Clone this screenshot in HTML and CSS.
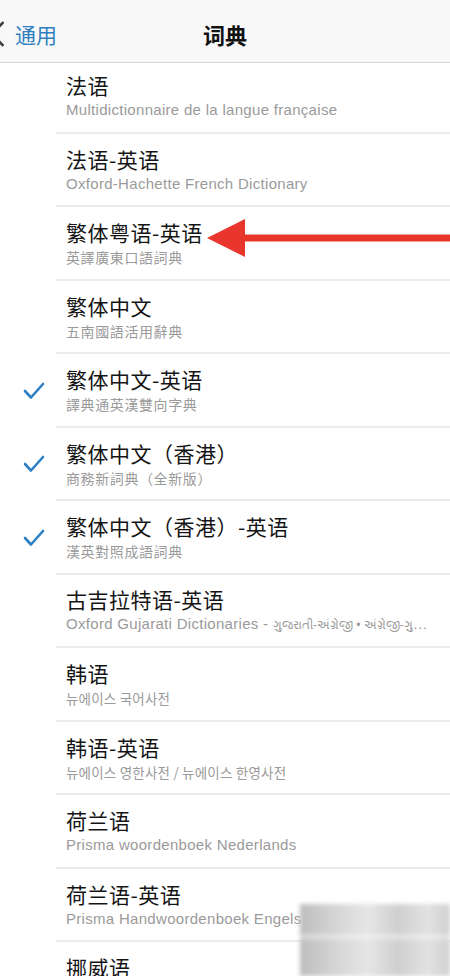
FILE: index.html
```html
<!DOCTYPE html>
<html lang="zh-CN">
<head>
<meta charset="utf-8">
<title>词典</title>
<link rel="stylesheet" href="styles.css">
</head>
<body>
<div class="page">
  <header class="nav">
    <div class="back">
      <svg class="chev" width="4" height="26" viewBox="0 0 4 26"><path d="M3.5 1 L-8 13 L3.5 25" fill="none" stroke="#3a3a3a" stroke-width="2.5"/></svg>
      <span class="back-label">通用</span>
    </div>
    <div class="nav-title">词典</div>
  </header>

  <main class="list">
    <div class="row row-first">
      <div class="mark"></div>
      <div class="body"><div class="title">法语</div><div class="sub">Multidictionnaire de la langue française</div></div>
    </div>
    <div class="row">
      <div class="mark"></div>
      <div class="body"><div class="title">法语-英语</div><div class="sub">Oxford-Hachette French Dictionary</div></div>
    </div>
    <div class="row">
      <div class="mark"></div>
      <div class="body"><div class="title">繁体粤语-英语</div><div class="sub tc">英譯廣東口語詞典</div></div>
    </div>
    <div class="row">
      <div class="mark"></div>
      <div class="body"><div class="title">繁体中文</div><div class="sub tc">五南國語活用辭典</div></div>
    </div>
    <div class="row">
      <div class="mark"><svg class="check" width="22" height="18" viewBox="0 0 22 18"><path d="M2 9 L8 15.5 L20 2" fill="none" stroke="#2d7fc4" stroke-width="2.6" stroke-linecap="round" stroke-linejoin="round"/></svg></div>
      <div class="body"><div class="title">繁体中文-英语</div><div class="sub tc">譯典通英漢雙向字典</div></div>
    </div>
    <div class="row">
      <div class="mark"><svg class="check" width="22" height="18" viewBox="0 0 22 18"><path d="M2 9 L8 15.5 L20 2" fill="none" stroke="#2d7fc4" stroke-width="2.6" stroke-linecap="round" stroke-linejoin="round"/></svg></div>
      <div class="body"><div class="title">繁体中文（香港）</div><div class="sub tc">商務新詞典（全新版）</div></div>
    </div>
    <div class="row">
      <div class="mark"><svg class="check" width="22" height="18" viewBox="0 0 22 18"><path d="M2 9 L8 15.5 L20 2" fill="none" stroke="#2d7fc4" stroke-width="2.6" stroke-linecap="round" stroke-linejoin="round"/></svg></div>
      <div class="body"><div class="title">繁体中文（香港）-英语</div><div class="sub tc">漢英對照成語詞典</div></div>
    </div>
    <div class="row">
      <div class="mark"></div>
      <div class="body"><div class="title">古吉拉特语-英语</div><div class="sub">Oxford Gujarati Dictionaries - <span class="gu">ગુજરાતી-અંગ્રેજી • અંગ્રેજી-ગુજરાતી</span></div></div>
    </div>
    <div class="row">
      <div class="mark"></div>
      <div class="body"><div class="title">韩语</div><div class="sub kr">뉴에이스 국어사전</div></div>
    </div>
    <div class="row">
      <div class="mark"></div>
      <div class="body"><div class="title">韩语-英语</div><div class="sub kr">뉴에이스 영한사전 / 뉴에이스 한영사전</div></div>
    </div>
    <div class="row">
      <div class="mark"></div>
      <div class="body"><div class="title">荷兰语</div><div class="sub">Prisma woordenboek Nederlands</div></div>
    </div>
    <div class="row">
      <div class="mark"></div>
      <div class="body"><div class="title">荷兰语-英语</div><div class="sub">Prisma Handwoordenboek Engels</div></div>
    </div>
    <div class="row">
      <div class="mark"></div>
      <div class="body"><div class="title">挪威语</div><div class="sub">Prisma woordenboek Noors</div></div>
    </div>
  </main>

  <svg class="arrow" width="245" height="42" viewBox="0 0 245 42">
    <polygon points="2,20 40,1 40,39" fill="#e8362d"/>
    <rect x="36" y="16.5" width="209" height="7" fill="#e8362d"/>
  </svg>

  <div class="watermark"></div>
</div>
</body>
</html>
```
FILE: styles.css
```css
html, body {
  margin: 0;
  padding: 0;
  background: #ffffff;
  overflow: hidden;
}

.page {
  position: relative;
  width: 450px;
  height: 976px;
  overflow: hidden;
  font-family: "Noto Sans CJK SC", "Noto Sans", sans-serif;
}

.nav {
  position: relative;
  box-sizing: border-box;
  height: 63px;
  padding-top: 6px;
  background: #f8f8f8;
  border-bottom: 1.5px solid #d6d6d6;
  display: flex;
  align-items: center;
  justify-content: center;
}

.back {
  position: absolute;
  left: 0;
  top: 6px;
  bottom: 0;
  display: flex;
  align-items: center;
}

.chev {
  display: block;
  margin-right: 11px;
}

.back-label {
  font-size: 21px;
  color: #2f7fbf;
  line-height: 1;
}

.nav-title {
  font-size: 22px;
  font-weight: 700;
  color: #111111;
  line-height: 1;
}

.list {
  display: flex;
  flex-direction: column;
}

.row {
  display: flex;
  height: 73.5px;
  flex: none;
}

.row-first {
  height: 70.5px;
}

.row-first .body {
  padding-top: 0;
  padding-bottom: 4px;
}

.mark {
  width: 56px;
  flex: none;
  box-sizing: border-box;
  padding-left: 23px;
  display: flex;
  align-items: center;
}

.check {
  display: block;
}

.body {
  flex: 1;
  min-width: 0;
  box-sizing: border-box;
  padding: 0 20px 0 10px;
  border-bottom: 2px solid #ebebeb;
  display: flex;
  flex-direction: column;
  justify-content: center;
}

.title {
  font-size: 21px;
  letter-spacing: 0.5px;
  line-height: 26px;
  color: #141414;
}

.sub {
  margin-top: 3px;
  font-family: "Liberation Sans", "Noto Sans", "Noto Sans CJK SC", sans-serif;
  font-size: 15px;
  line-height: 18px;
  letter-spacing: 0.3px;
  color: #9a9a9a;
  white-space: nowrap;
  overflow: hidden;
  text-overflow: ellipsis;
}

.gu {
  font-size: 12px;
  letter-spacing: 0;
}

.sub.tc {
  font-family: "Noto Sans CJK TC", sans-serif;
  font-size: 14px;
  letter-spacing: 0.6px;
}

.sub.kr {
  font-family: "Noto Sans CJK KR", sans-serif;
  font-size: 13.5px;
  letter-spacing: 0.2px;
}

.arrow {
  position: absolute;
  left: 205px;
  top: 218px;
}

.watermark {
  position: absolute;
  left: 300px;
  top: 904px;
  width: 150px;
  height: 72px;
  background:
    linear-gradient(180deg, rgba(255,255,255,0) 40%, rgba(255,255,255,0.5) 45%, rgba(255,255,255,0) 52%),
    linear-gradient(90deg, #bdbdbd 0%, #d6d6d6 25%, #e6e6e6 45%, #cfcfcf 65%, #e2e2e2 85%, #d0d0d0 100%);
  filter: blur(2px);
}
```
